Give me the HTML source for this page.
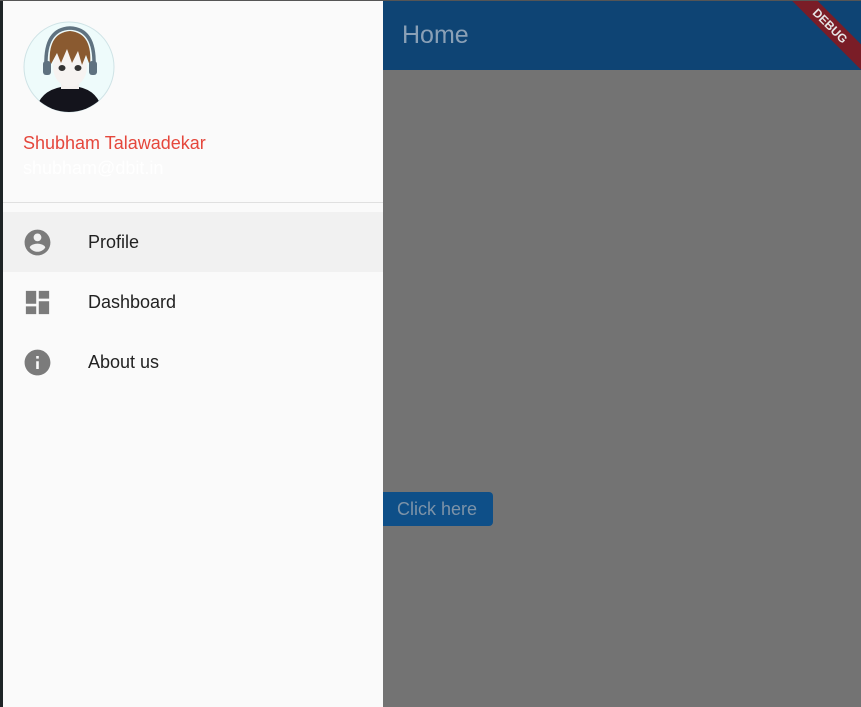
<!DOCTYPE html>
<html><head><style>
body{margin:0;width:861px;height:707px;overflow:hidden;background:#737373;font-family:"Liberation Sans",sans-serif;position:relative}
.top{position:absolute;left:0;top:0;width:861px;height:1px;background:#555}
.leftb{position:absolute;left:0;top:0;width:3px;height:707px;background:#1e2426}
.bar{position:absolute;left:383px;top:1px;width:478px;height:69px;background:#0e4474;overflow:hidden}
.bar .t{position:absolute;left:19px;top:20px;font-size:25px;color:#8aa0b6}
.rib{position:absolute;right:-34px;top:16px;width:130px;height:18px;background:#7a1d27;transform:rotate(45deg);color:#e6e6e6;font-weight:bold;font-size:12px;text-align:center;line-height:18px}
.btn{position:absolute;left:383px;top:492px;width:110px;height:34px;background:#0e4f88;border-radius:0 4px 4px 0;color:#7d93a8;font-size:18px;line-height:34px;text-indent:14px}
.drawer{position:absolute;left:3px;top:1px;width:380px;height:706px;background:#fafafa}
.name{position:absolute;left:20px;top:132px;font-size:18px;color:#e5473c}
.mail{position:absolute;left:20px;top:157px;font-size:18px;color:#fff}
.div{position:absolute;left:0;top:201px;width:380px;height:1px;background:#e0e0e0}
.item{position:absolute;left:0;width:380px;height:60px}
.item span{position:absolute;left:85px;top:20px;font-size:18px;color:#222}
.item svg{position:absolute;left:19px;top:15px}
</style></head><body>
<div class="bar"><div class="t">Home</div><div class="rib">DEBUG</div></div>
<div class="btn">Click here</div>
<div class="drawer">
<svg style="position:absolute;left:20px;top:20px" width="92" height="92" viewBox="0 0 92 92">
<defs><clipPath id="c"><circle cx="46" cy="46" r="45"/></clipPath></defs>
<circle cx="46" cy="46" r="45" fill="#eefbfb" stroke="#cfe3e6"/>
<g clip-path="url(#c)">
<path d="M12 92 Q16 70 38 66 L56 66 Q76 70 80 92Z" fill="#14141c"/>
<path d="M38 56 L38 68 L56 68 L56 56Z" fill="#f4f0ee"/>
<ellipse cx="47" cy="46" rx="17" ry="20" fill="#f6f3f1"/>
<path d="M27 45 Q24 12 47 10 Q70 12 67 45 L63 34 L59 44 L55 30 L49 42 L44 28 L38 42 L34 32Z" fill="#8a5a30"/>
<path d="M23 44 Q22 8 47 7 Q72 8 71 44" fill="none" stroke="#5f7280" stroke-width="3.5"/>
<rect x="20" y="40" width="8" height="14" rx="3" fill="#5f7280"/>
<rect x="66" y="40" width="8" height="14" rx="3" fill="#5f7280"/>
<ellipse cx="39" cy="47" rx="3.5" ry="3" fill="#333"/><ellipse cx="55" cy="47" rx="3.5" ry="3" fill="#333"/>
</g></svg>
<div class="name">Shubham Talawadekar</div>
<div class="mail">shubham@dbit.in</div>
<div class="div"></div>
<div class="item" style="top:211px;background:#f1f1f1">
<svg width="31" height="31" viewBox="0 0 24 24"><path fill="#7b7b7b" d="M12 2C6.48 2 2 6.48 2 12s4.48 10 10 10 10-4.48 10-10S17.52 2 12 2zm0 3c1.66 0 3 1.34 3 3s-1.34 3-3 3-3-1.34-3-3 1.34-3 3-3zm0 14.2c-2.5 0-4.71-1.28-6-3.22.03-1.99 4-3.08 6-3.08 1.99 0 5.970 1.09 6 3.08-1.29 1.94-3.5 3.22-6 3.22z"/></svg><span>Profile</span></div>
<div class="item" style="top:271px">
<svg width="31" height="31" viewBox="0 0 24 24"><path fill="#7b7b7b" d="M3 13h8V3H3v10zm0 8h8v-6H3v6zm10 0h8V11h-8v10zm0-18v6h8V3h-8z"/></svg><span>Dashboard</span></div>
<div class="item" style="top:331px">
<svg width="31" height="31" viewBox="0 0 24 24"><path fill="#7b7b7b" d="M12 2C6.48 2 2 6.48 2 12s4.48 10 10 10 10-4.48 10-10S17.52 2 12 2zm1 15h-2v-6h2v6zm0-8h-2V7h2v2z"/></svg><span>About us</span></div>
</div>
<div class="leftb"></div><div class="top"></div>
</body></html>
